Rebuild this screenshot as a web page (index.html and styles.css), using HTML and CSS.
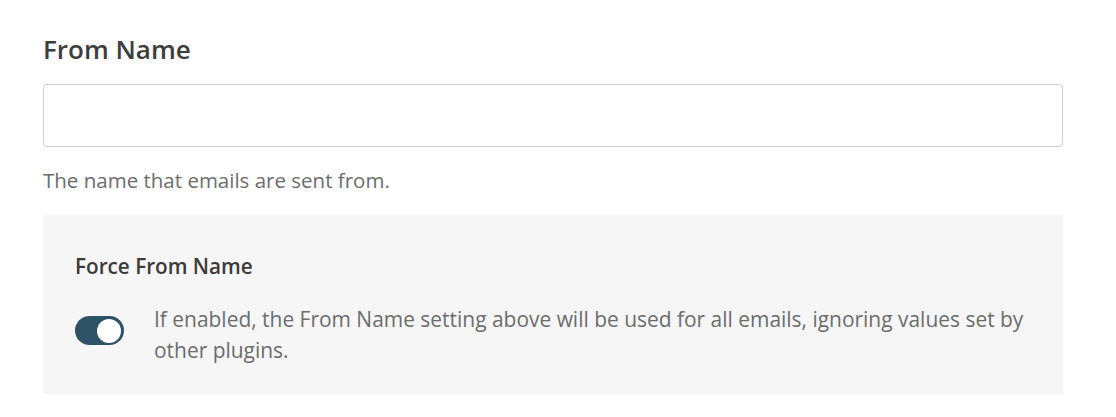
FILE: index.html
```html
<!DOCTYPE html>
<html>
<head>
<meta charset="utf-8">
<link rel="stylesheet" href="styles.css">
</head>
<body>
<div class="field">
  <h2 class="field-title">From Name</h2>
  <input class="text-input" type="text">
  <p class="help">The name that emails are sent from.</p>
  <div class="panel">
    <h3 class="panel-title">Force From Name</h3>
    <div class="toggle-row">
      <span class="toggle"><span class="knob"></span></span>
      <p class="toggle-desc">If enabled, the From Name setting above will be used for all emails, ignoring values set by other plugins.</p>
    </div>
  </div>
</div>
</body>
</html>
```
FILE: styles.css
```css
html, body {
  margin: 0;
  padding: 0;
  background: #ffffff;
}
body {
  font-family: "Open Sans", "Noto Sans", sans-serif;
  color: #444;
}
.field {
  padding: 31px 53px 0 43px;
  display: flex;
  flex-direction: column;
}
.field-title {
  margin: 0;
  font-size: 26px;
  font-weight: 600;
  line-height: 36px;
  color: #3d3d3d;
}
.text-input {
  margin-top: 17px;
  height: 63px;
  box-sizing: border-box;
  border: 1px solid #cfcfcf;
  border-radius: 4px;
  background: #fff;
  width: 100%;
}
.help {
  margin: 19px 0 0;
  font-size: 20.5px;
  line-height: 28px;
  color: #6c6c6c;
}
.panel {
  margin-top: 21px;
  background: #f6f6f6;
  padding: 37px 32px 28px 32px;
}
.panel-title {
  margin: 0;
  font-size: 20.7px;
  font-weight: 600;
  line-height: 28px;
  color: #3a3a3a;
}
.toggle-row {
  display: flex;
  align-items: flex-start;
  gap: 30px;
  margin-top: 24px;
}
.toggle {
  flex: none;
  margin-top: 12px;
  width: 49px;
  height: 29px;
  border-radius: 15px;
  background: #2d5265;
  display: flex;
  align-items: center;
  justify-content: flex-end;
  padding: 0 3px;
  box-sizing: border-box;
}
.knob {
  width: 24px;
  height: 24px;
  border-radius: 50%;
  background: #fff;
}
.toggle-desc {
  margin: 0;
  font-size: 20.95px;
  line-height: 31px;
  color: #6c6c6c;
}
```
